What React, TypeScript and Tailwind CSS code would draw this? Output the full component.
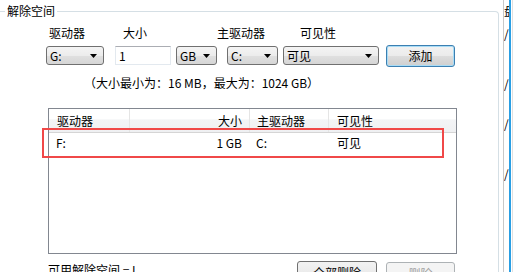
import React from "react";

const comboBg =
  "bg-[linear-gradient(#f4f4f4_0%,#ececec_50%,#e0e0e0_51%,#d6d6d6_100%)]";

function Arrow() {
  return (
    <svg width="7" height="4" viewBox="0 0 7 4" className="shrink-0">
      <path d="M0 0H7L3.5 4Z" fill="#000" />
    </svg>
  );
}

function Combo({ w, text }: { w: string; text: string }) {
  return (
    <div
      className={`${w} h-[19px] mt-[1px] border border-[#707070] rounded-[3px] ${comboBg} flex items-center pl-[3px] pr-[6px] shrink-0`}
    >
      <span className="flex-1 leading-[14px]">{text}</span>
      <Arrow />
    </div>
  );
}

export default function App() {
  return (
    <div className="w-[514px] h-[272px] overflow-hidden bg-white flex text-[12px] text-black font-['Noto_Sans_CJK_SC',sans-serif]">
      <div className="w-[499px] shrink-0 pt-[3px] relative">
        <fieldset className="border border-[#d5dfe5] border-l-0 border-b-0 rounded-tr-[4px] h-[300px] min-w-0 p-0 m-0">
          <legend className="ml-[5px] px-[2px] leading-[16px]">解除空间</legend>

          {/* labels */}
          <div className="flex pl-[49px] mt-[7px] h-[14px] leading-[14px]">
            <span className="w-[74px]">驱动器</span>
            <span className="w-[94px]">大小</span>
            <span className="w-[83px]">主驱动器</span>
            <span>可见性</span>
          </div>

          {/* controls */}
          <div className="flex items-start pl-[46px] mt-[5px] h-[22px]">
            <Combo w="w-[58px]" text="G:" />
            <div className="ml-[11px] mt-[1px] w-[56px] h-[19px] bg-white border border-[#e3e9ef] border-t-[#abadb3] flex items-center pl-[3px] leading-[14px] shrink-0">
              1
            </div>
            <div className="ml-[5px]">
              <Combo w="w-[41px]" text="GB" />
            </div>
            <div className="ml-[10px]">
              <Combo w="w-[51px]" text="C:" />
            </div>
            <div className="ml-[5px]">
              <Combo w="w-[96px]" text="可见" />
            </div>
            <div className="ml-[7px] w-[69px] h-[22px] border border-[#3c7fb1] rounded-[3px] shadow-[inset_0_0_0_1px_#a8dcf6] bg-[linear-gradient(#f2f2f2_0%,#ebebeb_50%,#dddddd_51%,#cfcfcf_100%)] flex items-center justify-center leading-[14px] shrink-0">
              添加
            </div>
          </div>

          {/* hint */}
          <div className="mt-[9px] pl-[84px] h-[14px] leading-[14px]">
            （大小最小为：16 MB，最大为：1024 GB）
          </div>

          {/* list */}
          <div className="mt-[18px] ml-[48px] w-[409px] h-[146px] border border-[#828790] bg-white flex flex-col">
            <div className="h-[24px] flex border-b border-[#d5d5d5] bg-[linear-gradient(#ffffff_0%,#ffffff_45%,#f3f4f6_46%,#eff0f2_100%)] leading-[14px]">
              <div className="w-[81px] border-r border-[#e5e5e5] pl-[8px] flex items-center">驱动器</div>
              <div className="w-[120px] border-r border-[#e5e5e5] pr-[7px] flex items-center justify-end">大小</div>
              <div className="w-[79px] border-r border-[#e5e5e5] pl-[7px] flex items-center">主驱动器</div>
              <div className="flex-1 pl-[8px] flex items-center">可见性</div>
            </div>
            <div className="h-[20px] flex items-center leading-[14px]">
              <div className="w-[81px] pl-[7px]">F:</div>
              <div className="w-[120px] pr-[8px] text-right">1 GB</div>
              <div className="w-[79px] pl-[6px]">C:</div>
              <div className="flex-1 pl-[8px]">可见</div>
            </div>
          </div>

          {/* bottom */}
          <div className="mt-[7px] flex items-start">
            <div className="pl-[48px] w-[297px] leading-[14px] pt-[2px]">可用解除空间 = I</div>
            <div className="w-[80px] h-[23px] border border-[#707070] rounded-[3px] bg-[linear-gradient(#f2f2f2_0%,#ebebeb_50%,#dddddd_51%,#cfcfcf_100%)] flex items-center justify-center leading-[14px]">
              全部删除
            </div>
            <div className="ml-[9px] mt-[1px] w-[69px] h-[23px] border border-[#adb2b5] rounded-[3px] bg-[#f4f4f4] text-[#a0a0a0] flex items-center justify-center leading-[14px]">
              删除
            </div>
          </div>
        </fieldset>

        {/* red annotation */}
        <div className="absolute left-[42px] top-[128px] w-[402px] h-[30px] border-2 border-[#f04848]" />
      </div>

      {/* right strip */}
      <div className="flex-1 flex">
        <div className="w-[4px]" />
        <div className="w-px bg-[#c8c8c8]" />
        <div className="w-[5px] overflow-hidden flex flex-col leading-[14px] text-[12px]">
          <div className="h-[4px]" />
          <div className="h-[14px] whitespace-nowrap">盘</div>
          <div className="h-[9px]" />
          <div className="h-[14px]">/</div>
          <div className="h-[36px]" />
          <div className="h-[14px]">/</div>
          <div className="h-[26px]" />
          <div className="h-[14px]">/</div>
          <div className="h-[36px]" />
          <div className="h-[14px]">/</div>
        </div>
        <div className="w-[2px] bg-[#2a9fe4]" />
        <div className="w-px" />
        <div className="w-px bg-[#e0e0e0]" />
      </div>
    </div>
  );
}
